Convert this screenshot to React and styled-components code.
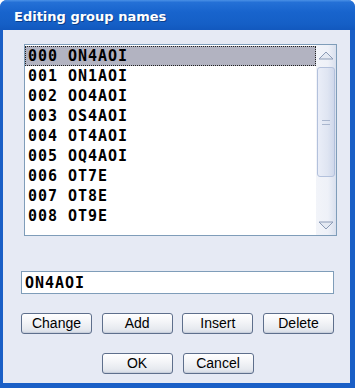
import styled, { createGlobalStyle } from 'styled-components';

const groups = [
    '000 ON4AOI',
    '001 ON1AOI',
    '002 OO4AOI',
    '003 OS4AOI',
    '004 OT4AOI',
    '005 OQ4AOI',
    '006 OT7E',
    '007 OT8E',
    '008 OT9E',
];

const GlobalStyle = createGlobalStyle`
	html, body {
		margin: 0;
		padding: 0;
		background: #ffffff;
	}
`;

const UpArrow = () => (
    <svg width="16" height="9" viewBox="0 0 16 9">
        <polygon points="1,8 8,1 15,8" fill="#e4e9f2" stroke="#8c9bb6" strokeWidth="1" />
    </svg>
);

const DownArrow = () => (
    <svg width="16" height="9" viewBox="0 0 16 9">
        <polygon points="1,1 8,8 15,1" fill="#e4e9f2" stroke="#8c9bb6" strokeWidth="1" />
    </svg>
);

const App = () => {
    return (
        <>
            <GlobalStyle />
            <Window>
                <TitleBar>
                    <TitleText>Editing group names</TitleText>
                </TitleBar>
                <Body>
                    <ListBox>
                        <ListItems>
                            {groups.map((g, i) => (
                                <ListRow key={g} $selected={i === 0}>
                                    {g}
                                </ListRow>
                            ))}
                        </ListItems>
                        <ScrollBar>
                            <ArrowButton>
                                <UpArrow />
                            </ArrowButton>
                            <Thumb>
                                <Grip />
                            </Thumb>
                            <Track />
                            <ArrowButton>
                                <DownArrow />
                            </ArrowButton>
                        </ScrollBar>
                    </ListBox>

                    <NameInput defaultValue="ON4AOI" />

                    <ButtonRow>
                        <Button>Change</Button>
                        <Button>Add</Button>
                        <Button>Insert</Button>
                        <Button>Delete</Button>
                    </ButtonRow>

                    <DialogButtons>
                        <Button>OK</Button>
                        <Button>Cancel</Button>
                    </DialogButtons>
                </Body>
            </Window>
        </>
    );
};

const Window = styled.div`
	width: 355px;
	height: 388px;
	display: flex;
	flex-direction: column;
	background: #1a5fc6;
	border-radius: 7px 7px 0 0;
	overflow: hidden;
	box-sizing: border-box;
`;

const TitleBar = styled.div`
	height: 30px;
	flex: none;
	display: flex;
	align-items: center;
	padding-left: 14px;
	padding-top: 2px;
	box-sizing: border-box;
	background: linear-gradient(#4a90e6 0%, #2470d6 8%, #1864cd 40%, #155fc6 80%, #1258be 100%);
`;

const TitleText = styled.span`
	font-family: 'DejaVu Sans', sans-serif;
	font-weight: 700;
	font-size: 13px;
	color: #ffffff;
	text-shadow: 1px 1px 0 #0b3f8c;
`;

const Body = styled.div`
	flex: 1;
	margin: 0 5px 5px 3px;
	background: #e6eaf4;
	padding: 14px 16px 0 18px;
	display: flex;
	flex-direction: column;
	box-sizing: border-box;
`;

const ListBox = styled.div`
	margin-left: 3px;
	width: 313px;
	height: 192px;
	border: 1px solid #7f9db9;
	background: #ffffff;
	display: flex;
	box-sizing: border-box;
`;

const ListItems = styled.div`
	flex: 1;
	padding-top: 1px;
	display: flex;
	flex-direction: column;
`;

const ListRow = styled.div`
	height: 20px;
	line-height: 19px;
	padding-left: 2px;
	font-family: 'DejaVu Sans Mono', monospace;
	font-weight: 700;
	font-size: 15px;
	letter-spacing: 0.97px;
	color: #000000;
	white-space: pre;
	box-sizing: border-box;
	background: ${(p) => (p.$selected ? '#b2b3c1' : 'transparent')};
	border: 1px dotted ${(p) => (p.$selected ? '#222222' : 'transparent')};
`;

const ScrollBar = styled.div`
	width: 20px;
	flex: none;
	display: flex;
	flex-direction: column;
	align-items: center;
	background: linear-gradient(to right, #f2f4f9 0%, #eef1f8 60%, #d9e0ee 100%);
`;

const ArrowButton = styled.div`
	height: 20px;
	width: 100%;
	flex: none;
	display: flex;
	align-items: center;
	justify-content: center;
`;

const Thumb = styled.div`
	margin-top: 2px;
	width: 18px;
	height: 110px;
	flex: none;
	box-sizing: border-box;
	border: 1px solid #b3c1dc;
	border-radius: 3px;
	background: linear-gradient(to right, #eaeef8 0%, #dfe5f2 60%, #cfd8eb 100%);
	display: flex;
	align-items: center;
	justify-content: center;
`;

const Grip = styled.div`
	width: 8px;
	height: 3px;
	border-top: 1px solid #a9b6ce;
	border-bottom: 1px solid #a9b6ce;
`;

const Track = styled.div`
	flex: 1;
`;

const NameInput = styled.input`
	margin-top: 35px;
	width: 313px;
	height: 23px;
	box-sizing: border-box;
	border: 1px solid #7f9db9;
	background: #ffffff;
	padding: 0 3px;
	font-family: 'DejaVu Sans Mono', monospace;
	font-weight: 700;
	font-size: 15px;
	letter-spacing: 0.97px;
	color: #000000;
	outline: none;
`;

const ButtonRow = styled.div`
	margin-top: 19px;
	width: 313px;
	display: flex;
	justify-content: space-between;
`;

const DialogButtons = styled.div`
	margin-top: 19px;
	width: 313px;
	display: flex;
	justify-content: center;
	gap: 10px;
`;

const Button = styled.button`
	width: 71px;
	height: 21px;
	padding: 0;
	box-sizing: border-box;
	border: 1px solid #5e6f8c;
	border-radius: 3px;
	background: linear-gradient(#ffffff 0%, #f4f5f8 40%, #e6e9ef 80%, #d6dbe4 100%);
	box-shadow: inset 0 -1px 0 #c9d0dc;
	font-family: 'Liberation Sans', Arial, sans-serif;
	font-size: 14px;
	color: #000000;
	line-height: 19px;
`;

export default App;
